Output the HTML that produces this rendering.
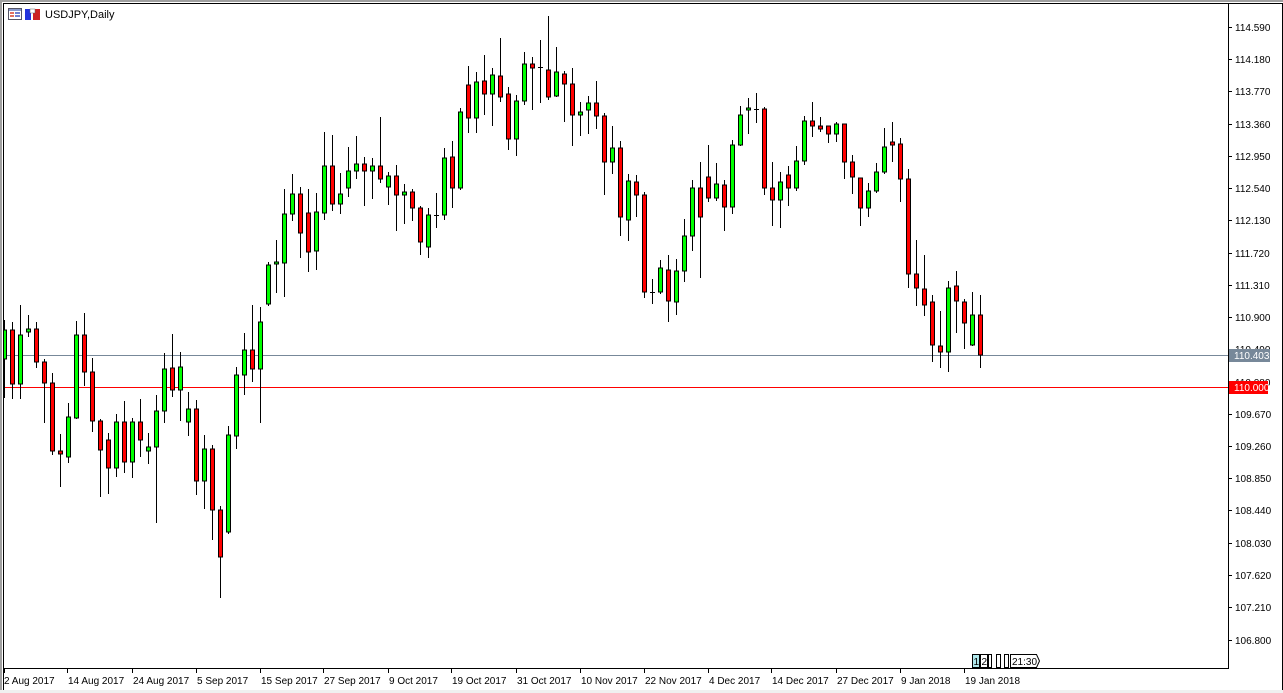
<!DOCTYPE html>
<html><head><meta charset="utf-8"><style>
html,body{margin:0;padding:0;background:#f0f0f0;}
body{width:1283px;height:693px;overflow:hidden;position:relative;font-family:"Liberation Sans",sans-serif;}
svg{position:absolute;left:0;top:0}
text{font-family:"Liberation Sans",sans-serif;font-size:10px;fill:#000}
</style></head><body>
<svg width="1283" height="693" viewBox="0 0 1283 693" xmlns="http://www.w3.org/2000/svg">
<defs><clipPath id="c"><rect x="4" y="4" width="1224" height="664"/></clipPath></defs>
<rect x="0" y="0" width="1283" height="693" fill="#a0a0a0"/>
<rect x="2" y="2" width="1281" height="688" fill="#fff"/>
<rect x="3.5" y="3.5" width="1279" height="688" fill="none" stroke="#000"/>
<rect x="0" y="690" width="1283" height="3" fill="#f0f0f0"/>
<!-- header -->
<g>
<rect x="8.5" y="8.5" width="13" height="11" fill="#fff" stroke="#556"/>
<rect x="9" y="9" width="12" height="2" fill="#8899cc"/>
<rect x="10" y="12" width="4" height="2" fill="#e07060"/><rect x="15" y="12" width="5" height="2" fill="#7080d0"/>
<rect x="10" y="15" width="4" height="2" fill="#e07060"/><rect x="15" y="15" width="5" height="2" fill="#7080d0"/>
<rect x="25" y="9" width="6" height="11" fill="#2233dd"/><rect x="33" y="9" width="7" height="11" fill="#cc2222"/>
<rect x="30" y="9" width="5" height="4" fill="#fff" stroke="#666" stroke-width="0.5"/>
<text x="45" y="18" style="font-size:11px">USDJPY,Daily</text>
</g>
<!-- axes -->
<line x1="1228.5" y1="4" x2="1228.5" y2="668" stroke="#000"/>
<line x1="4" y1="668.5" x2="1229" y2="668.5" stroke="#000"/>
<g stroke="#000">
<path d="M1228 27.5h4M1228 59.5h4M1228 91.5h4M1228 124.5h4M1228 156.5h4M1228 188.5h4M1228 220.5h4M1228 253.5h4M1228 285.5h4M1228 317.5h4M1228 349.5h4M1228 382.5h4M1228 414.5h4M1228 446.5h4M1228 478.5h4M1228 510.5h4M1228 543.5h4M1228 575.5h4M1228 607.5h4M1228 640.5h4"/>
<path d="M4.5 668v5M67.5 668v5M132.5 668v5M196.5 668v5M260.5 668v5M323.5 668v5M388.5 668v5M451.5 668v5M516.5 668v5M580.5 668v5M644.5 668v5M708.5 668v5M771.5 668v5M836.5 668v5M900.5 668v5M964.5 668v5"/>
</g>
<g>
<text x="1235" y="31">114.590</text><text x="1235" y="63">114.180</text><text x="1235" y="95">113.770</text><text x="1235" y="128">113.360</text><text x="1235" y="160">112.950</text><text x="1235" y="192">112.540</text><text x="1235" y="224">112.130</text><text x="1235" y="257">111.720</text><text x="1235" y="289">111.310</text><text x="1235" y="321">110.900</text><text x="1235" y="353">110.490</text><text x="1235" y="386">110.080</text><text x="1235" y="418">109.670</text><text x="1235" y="450">109.260</text><text x="1235" y="482">108.850</text><text x="1235" y="514">108.440</text><text x="1235" y="547">108.030</text><text x="1235" y="579">107.620</text><text x="1235" y="611">107.210</text><text x="1235" y="644">106.800</text>
</g>
<g>
<text x="4" y="684">2 Aug 2017</text><text x="68" y="684">14 Aug 2017</text><text x="133" y="684">24 Aug 2017</text><text x="197" y="684">5 Sep 2017</text><text x="261" y="684">15 Sep 2017</text><text x="324" y="684">27 Sep 2017</text><text x="389" y="684">9 Oct 2017</text><text x="452" y="684">19 Oct 2017</text><text x="517" y="684">31 Oct 2017</text><text x="581" y="684">10 Nov 2017</text><text x="645" y="684">22 Nov 2017</text><text x="709" y="684">4 Dec 2017</text><text x="772" y="684">14 Dec 2017</text><text x="837" y="684">27 Dec 2017</text><text x="901" y="684">9 Jan 2018</text><text x="965" y="684">19 Jan 2018</text>
</g>
<!-- level lines -->
<line x1="4" y1="355.5" x2="1228" y2="355.5" stroke="#778899"/>
<line x1="4" y1="387.5" x2="1228" y2="387.5" stroke="#ff0000"/>
<rect x="1229" y="349" width="41" height="13" fill="#778899"/>
<text x="1234" y="359" style="fill:#fff">110.403</text>
<rect x="1229" y="381" width="39" height="13" fill="#ff0000"/>
<text x="1234" y="391" style="fill:#fff">110.000</text>
<!-- candles -->
<g clip-path="url(#c)">
<path fill="none" stroke="#000" d="M4.5 320V398M12.5 322V399M20.5 305V399M28.5 315V337M36.5 322V368M44.5 359V423M52.5 373V455M60.5 434V487M68.5 403V463M76.5 321V419M84.5 313V386M92.5 358V432M100.5 419V497M108.5 433V494M116.5 414V477M124.5 401V473M132.5 418V478M140.5 399V457M148.5 433V464M156.5 395V523M164.5 353V423M172.5 334V397M180.5 352V421M188.5 392V436M196.5 400V495M204.5 435V509M212.5 445V540M220.5 506V598M228.5 426V534M236.5 367V449M244.5 333V395M252.5 305V382M260.5 307V423M268.5 262V306M276.5 240V293M284.5 189V297M292.5 174V221M300.5 187V258M308.5 189V272M316.5 193V270M324.5 132V220M332.5 135V211M340.5 173V214M348.5 147V197M356.5 136V179M364.5 157V206M372.5 158V199M380.5 117V183M388.5 172V205M396.5 165V231M404.5 184V224M412.5 189V221M420.5 206V255M428.5 208V258M436.5 193V228M444.5 148V220M452.5 141V208M460.5 108V190M468.5 66V133M476.5 72V133M484.5 55V115M492.5 68V126M500.5 38V102M508.5 87V150M516.5 95V156M524.5 52V105M532.5 57V110M540.5 40V103M548.5 16V100M556.5 47V97M564.5 71V122M572.5 68V146M580.5 102V136M588.5 96V134M596.5 81V129M604.5 113V195M612.5 126V174M620.5 141V236M628.5 174V241M636.5 175V217M644.5 192V298M652.5 279V304M660.5 260V294M668.5 255V322M676.5 259V315M684.5 219V282M692.5 180V251M700.5 162V278M708.5 145V202M716.5 163V201M724.5 180V231M732.5 140V214M740.5 106V146M748.5 98V134M756.5 93V123M764.5 107V195M772.5 162V226M780.5 172V228M788.5 166V206M796.5 146V191M804.5 116V165M812.5 102V137M820.5 117V132M828.5 126V143M836.5 122V142M844.5 124V179M852.5 155V194M860.5 178V226M868.5 183V217M876.5 163V193M884.5 128V174M892.5 122V162M900.5 138V202M908.5 169V288M916.5 240V306M924.5 255V316M932.5 295V362M940.5 311V368M948.5 281V372M956.5 271V333M964.5 299V349M972.5 292V346M980.5 295V368M434 215.5h5M538 67.5h5M650 292.5h5M754 109.5h5"/>
<path fill="#00ff00" stroke="#000" d="M2.5 330h4v29h-4zM18.5 335h4v49h-4zM26.5 329h4v3h-4zM66.5 417h4v40h-4zM74.5 335h4v83h-4zM114.5 422h4v46h-4zM130.5 422h4v40h-4zM146.5 447h4v4h-4zM154.5 411h4v36h-4zM162.5 369h4v42h-4zM178.5 367h4v23h-4zM186.5 409h4v13h-4zM202.5 449h4v32h-4zM226.5 435h4v97h-4zM234.5 375h4v61h-4zM242.5 350h4v25h-4zM258.5 322h4v47h-4zM266.5 265h4v39h-4zM274.5 262h4v2h-4zM282.5 214h4v49h-4zM290.5 194h4v20h-4zM314.5 212h4v39h-4zM322.5 166h4v47h-4zM338.5 194h4v10h-4zM346.5 171h4v17h-4zM354.5 164h4v7h-4zM370.5 166h4v5h-4zM386.5 176h4v11h-4zM402.5 192h4v3h-4zM426.5 215h4v32h-4zM442.5 158h4v57h-4zM458.5 112h4v76h-4zM474.5 82h4v36h-4zM490.5 75h4v19h-4zM514.5 101h4v38h-4zM522.5 64h4v37h-4zM554.5 72h4v24h-4zM578.5 112h4v3h-4zM586.5 103h4v7h-4zM610.5 148h4v14h-4zM626.5 181h4v39h-4zM658.5 268h4v24h-4zM674.5 271h4v31h-4zM682.5 236h4v35h-4zM690.5 188h4v48h-4zM714.5 184h4v14h-4zM730.5 145h4v62h-4zM738.5 115h4v30h-4zM746.5 108h4v2h-4zM778.5 182h4v18h-4zM794.5 161h4v27h-4zM802.5 121h4v40h-4zM834.5 124h4v10h-4zM866.5 191h4v17h-4zM874.5 172h4v19h-4zM882.5 147h4v25h-4zM946.5 288h4v64h-4zM970.5 315h4v30h-4z"/>
<path fill="#ff0000" stroke="#000" d="M10.5 330h4v54h-4zM34.5 329h4v33h-4zM42.5 362h4v21h-4zM50.5 383h4v68h-4zM58.5 451h4v3h-4zM82.5 335h4v37h-4zM90.5 372h4v49h-4zM98.5 421h4v29h-4zM106.5 440h4v28h-4zM122.5 422h4v40h-4zM138.5 422h4v18h-4zM170.5 368h4v22h-4zM194.5 409h4v72h-4zM210.5 449h4v61h-4zM218.5 510h4v47h-4zM250.5 350h4v19h-4zM298.5 194h4v39h-4zM306.5 213h4v39h-4zM330.5 166h4v38h-4zM362.5 164h4v7h-4zM378.5 166h4v13h-4zM394.5 176h4v19h-4zM410.5 192h4v16h-4zM418.5 208h4v34h-4zM450.5 157h4v31h-4zM466.5 85h4v33h-4zM482.5 81h4v13h-4zM498.5 76h4v21h-4zM506.5 94h4v45h-4zM530.5 64h4v4h-4zM546.5 70h4v27h-4zM562.5 74h4v10h-4zM570.5 84h4v31h-4zM594.5 103h4v13h-4zM602.5 116h4v46h-4zM618.5 148h4v69h-4zM634.5 182h4v13h-4zM642.5 195h4v97h-4zM666.5 270h4v31h-4zM698.5 188h4v29h-4zM706.5 177h4v21h-4zM722.5 185h4v22h-4zM762.5 109h4v79h-4zM770.5 188h4v12h-4zM786.5 175h4v13h-4zM810.5 121h4v5h-4zM818.5 126h4v3h-4zM826.5 126h4v8h-4zM842.5 124h4v38h-4zM850.5 162h4v15h-4zM858.5 178h4v30h-4zM890.5 142h4v3h-4zM898.5 144h4v35h-4zM906.5 179h4v95h-4zM914.5 274h4v14h-4zM922.5 289h4v16h-4zM930.5 302h4v43h-4zM938.5 346h4v6h-4zM954.5 286h4v15h-4zM962.5 302h4v21h-4zM978.5 315h4v40h-4z"/>
</g>
<!-- bottom buttons -->
<g>
<rect x="972.5" y="654.5" width="7" height="13" fill="#b0e8ec" stroke="#000"/>
<text x="973.5" y="665" style="font-size:10px">1</text>
<rect x="980.5" y="654.5" width="7" height="13" fill="#fff" stroke="#000"/>
<text x="981.5" y="665" style="font-size:10px">2</text>
<rect x="988.5" y="654.5" width="3" height="13" fill="#fff" stroke="#000"/>
<rect x="996.5" y="654.5" width="4" height="13" fill="#fff" stroke="#000"/>
<rect x="1004.5" y="654.5" width="4" height="13" fill="#fff" stroke="#000"/>
<path d="M1010.5 654.5h26l3 6.5l-3 6.5h-26z" fill="#fff" stroke="#000"/>
<text x="1012" y="665" style="font-size:10px">21:30</text>
</g>
</svg>
</body></html>
